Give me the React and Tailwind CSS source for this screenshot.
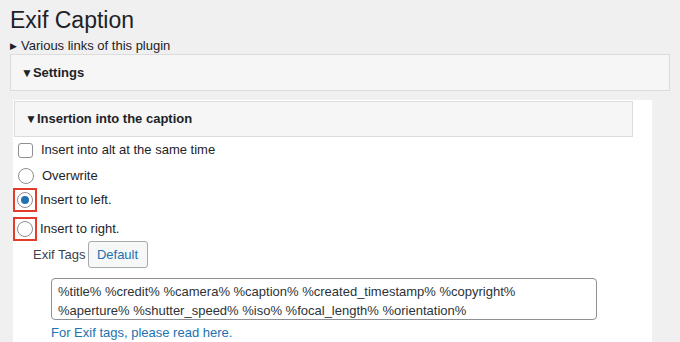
import React from 'react';

const font = { fontFamily: '"Liberation Sans", Arial, sans-serif' };

function Radio({ checked }) {
  return (
    <span className="flex h-[16px] w-[16px] items-center justify-center rounded-full border border-[#8c8f94] bg-white">
      {checked && <span className="h-[8px] w-[8px] rounded-full bg-[#2271b1]" />}
    </span>
  );
}

export default function App() {
  return (
    <div className="h-[342px] w-[680px] overflow-hidden bg-[#f0f0f1] text-[13px] text-[#1d2327]" style={font}>
      <div className="pl-[10px] pt-[6px]">
        <h1 className="text-[23px] leading-[29px]">Exif Caption</h1>
        <div className="mt-[3px] flex items-center gap-[4px] leading-[16px]">
          <span className="text-[9px]">▶</span>
          <span>Various links of this plugin</span>
        </div>
      </div>

      {/* Settings box */}
      <div className="ml-[10px] flex h-[37px] w-[660px] items-center border border-[#dcdcde] bg-[#f6f6f6] pl-[10px] font-bold">
        <span className="text-[12px]">▼</span>
        <span>Settings</span>
      </div>

      {/* Insertion panel */}
      <div className="ml-[13px] mt-[9px] w-[639px] bg-white pt-[1px]">
        <div className="ml-[1px] flex h-[36px] w-[619px] items-center border border-[#dcdcde] bg-[#f6f6f6] pl-[10px] font-bold">
          <span className="text-[12px]">▼</span>
          <span>Insertion into the caption</span>
        </div>

        <div className="mt-[6px] flex flex-col">
          <label className="flex h-[14px] items-center gap-[8px] pl-[5px]">
            <span className="h-[15px] w-[15px] rounded-[3px] border border-[#8c8f94] bg-white" />
            <span>Insert into alt at the same time</span>
          </label>
          <label className="mt-[11px] flex h-[16px] items-center gap-[8px] pl-[5px]">
            <Radio />
            <span>Overwrite</span>
          </label>
          <label className="mt-[4px] flex items-center gap-[3px]">
            <span className="flex h-[24px] w-[24px] items-center justify-center border-2 border-[#e53b2c]">
              <Radio checked />
            </span>
            <span>Insert to left.</span>
          </label>
          <label className="mt-[5px] flex items-center gap-[3px]">
            <span className="flex h-[24px] w-[24px] items-center justify-center border-2 border-[#e53b2c]">
              <Radio />
            </span>
            <span>Insert to right.</span>
          </label>
        </div>

        <div className="flex items-center gap-[2px] pl-[20px]">
          <span className="text-[#3c434a]">Exif Tags</span>
          <button className="h-[27px] w-[60px] rounded-[3px] border border-[#a7aaad] bg-[#f6f7f7] text-[13px] text-[#2271b1]" style={font}>
            Default
          </button>
        </div>

        <div className="ml-[38px] mt-[10px] h-[42px] w-[546px] whitespace-pre-wrap rounded-[4px] border border-[#8c8f94] bg-white px-[6px] pt-[3px] leading-[19px] text-[#2c3338]">
          {'%title% %credit% %camera% %caption% %created_timestamp% %copyright%\n%aperture% %shutter_speed% %iso% %focal_length% %orientation%'}
        </div>
        <a className="ml-[38px] mt-[3px] block text-[#2271b1]" href="#">For Exif tags, please read here.</a>
      </div>
    </div>
  );
}
